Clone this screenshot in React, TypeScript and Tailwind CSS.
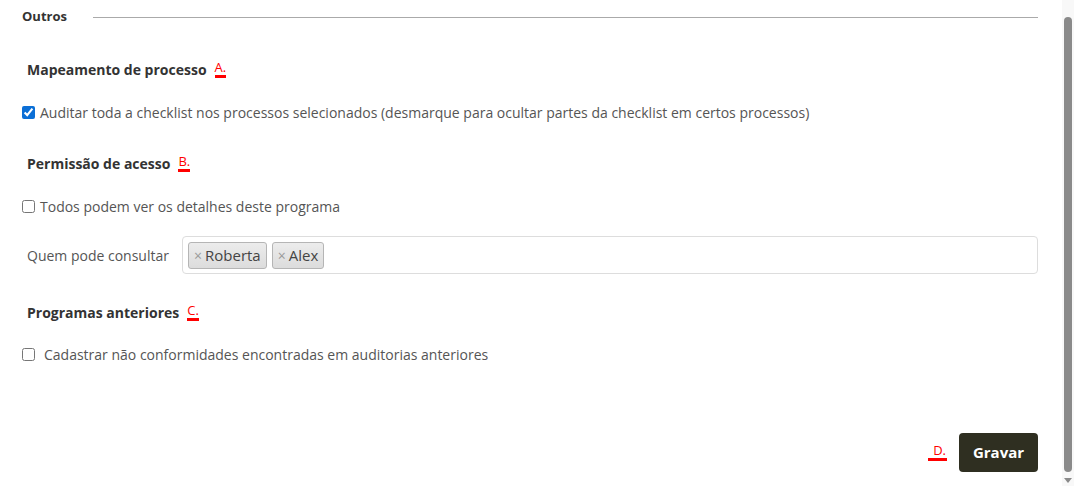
import React, { useState } from 'react';

const Mark = ({ label, wide }: { label: string; wide?: boolean }) => (
  <span
    className={`inline-block border-b-[3px] border-[#f00] pb-[1px] text-[13px] font-normal leading-none text-[#f00] ${
      wide ? 'pl-[5px] pr-[1px]' : 'ml-[8px]'
    }`}
  >
    {label}
  </span>
);

const Tag = ({ name }: { name: string }) => (
  <span className="flex h-[27px] items-center gap-[3px] rounded-[3px] border border-[#b5b5b5] bg-gradient-to-b from-[#ececec] to-[#dcdcdc] px-[5px] text-[15px] text-[#444]">
    <span className="text-[14px] text-[#999]">×</span>
    {name}
  </span>
);

export default function App() {
  const [fullAudit, setFullAudit] = useState(true);
  const [allCanSee, setAllCanSee] = useState(false);
  const [importPrev, setImportPrev] = useState(false);

  return (
    <div className="flex h-[486px] w-full bg-white text-[#555]" style={{ fontFamily: '"Segoe UI", "Open Sans", "Noto Sans", sans-serif' }}>
      <div className="flex flex-1 flex-col pl-[22px] pr-[24px]">
        {/* Section title */}
        <div className="flex h-[34px] items-center gap-[26px]">
          <span className="text-[13px] font-bold text-[#333]">Outros</span>
          <div className="h-px flex-1 bg-[#aaa]" />
        </div>

        {/* Mapeamento */}
        <h3 className="mt-[25px] flex h-[20px] items-center pl-[5px] text-[14px] font-bold text-[#333]">
          Mapeamento de processo <Mark label="A." />
        </h3>
        <label className="mt-[23px] flex h-[20px] items-center gap-[5px] text-[14px]">
          <input
            type="checkbox"
            checked={fullAudit}
            onChange={(e) => setFullAudit(e.target.checked)}
            className="m-0 h-[13px] w-[13px] accent-[#0b6fd6]"
          />
          Auditar toda a checklist nos processos selecionados (desmarque para ocultar partes da checklist em certos processos)
        </label>

        {/* Permissao */}
        <h3 className="mt-[31px] flex h-[20px] items-center pl-[5px] text-[14px] font-bold text-[#333]">
          Permissão de acesso <Mark label="B." />
        </h3>
        <label className="mt-[23px] flex h-[20px] items-center gap-[5px] text-[14px]">
          <input
            type="checkbox"
            checked={allCanSee}
            onChange={(e) => setAllCanSee(e.target.checked)}
            className="m-0 h-[13px] w-[13px]"
          />
          Todos podem ver os detalhes deste programa
        </label>
        <div className="mt-[20px] flex items-center">
          <span className="w-[160px] pl-[5px] text-[14px]">Quem pode consultar</span>
          <div className="flex h-[38px] flex-1 items-center gap-[5px] rounded-[4px] border border-[#ddd] px-[5px]">
            <Tag name="Roberta" />
            <Tag name="Alex" />
          </div>
        </div>

        {/* Programas anteriores */}
        <h3 className="mt-[28px] flex h-[20px] items-center pl-[5px] text-[14px] font-bold text-[#333]">
          Programas anteriores <Mark label="C." />
        </h3>
        <label className="mt-[22px] flex h-[20px] items-center gap-[9px] text-[14px]">
          <input
            type="checkbox"
            checked={importPrev}
            onChange={(e) => setImportPrev(e.target.checked)}
            className="m-0 h-[13px] w-[13px]"
          />
          Cadastrar não conformidades encontradas em auditorias anteriores
        </label>

        <div className="mt-auto mb-[14px] flex items-center justify-end gap-[12px]">
          <Mark label="D." wide />
          <button className="h-[39px] w-[79px] rounded-[4px] bg-[#2f2f21] text-[15px] font-bold text-white">
            Gravar
          </button>
        </div>
      </div>

      {/* scrollbar */}
      <div className="flex w-[12px] flex-col items-center bg-[#f8f8f8] pt-[17px] pb-[3px]">
        <div className="w-[8px] flex-1 rounded-[4px] bg-[#8a8a8a]" />
        <div className="mt-[6px] h-0 w-0 border-x-[4px] border-t-[5px] border-x-transparent border-t-[#8a8a8a]" />
      </div>
    </div>
  );
}
